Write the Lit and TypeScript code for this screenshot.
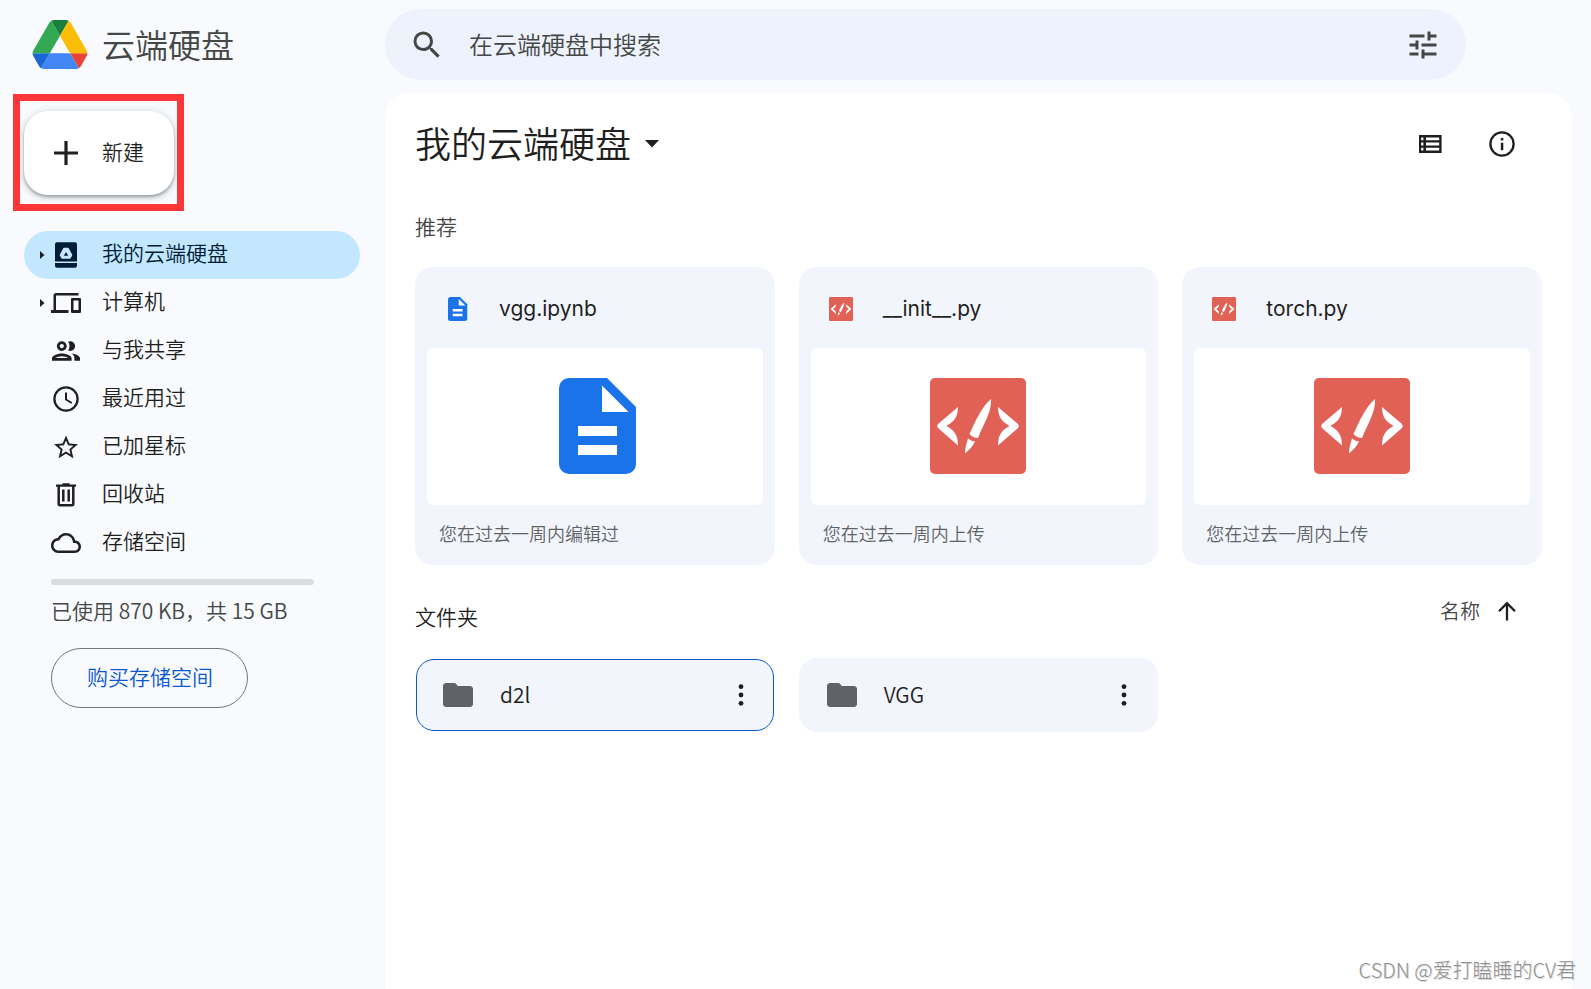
import { LitElement, html, css, svg, nothing } from "lit";
import { customElement, property } from "lit/decorators.js";
import { classMap } from "lit/directives/class-map.js";

const icons = {
  drive: svg`<svg viewBox="0 0 30 30"><path d="M6 2.3h18a2 2 0 0 1 2 2v17.3H4V4.300a2 2 0 0 1 2-2zM4 23h22v2.700a2 2 0 0 1-2 2H6a2 2 0 0 1-2-2z"/><path d="M13.200 9h3.600l3.200 6-1.500 2.500h-7L10 15z" fill="#c2e7ff" stroke="#c2e7ff" stroke-width="2.500" stroke-linejoin="round"/><path d="M15 12l2.200 3.800h-4.400z"/></svg>`,
  computers: svg`<svg viewBox="0 0 24 24"><path d="M4 6h18V4H4c-1.100 0-2 .9-2 2v11.500H0V20h14v-2.500H4V6zm19 2h-6c-.55 0-1 .45-1 1v10c0 .55.45 1 1 1h6c.55 0 1-.45 1-1V9c0-.55-.45-1-1-1zm-1 9.500h-4V10h4v7.500z"/></svg>`,
  shared: svg`<svg viewBox="1.300 1.300 21.400 21.400"><path d="M9 13.750c-2.340 0-7 1.170-7 3.500V19h14v-1.750c0-2.330-4.660-3.500-7-3.500zM4.340 17c.84-.58 2.870-1.250 4.660-1.250s3.820.67 4.660 1.250H4.340zM9 12c1.930 0 3.500-1.570 3.500-3.500S10.930 5 9 5 5.500 6.570 5.500 8.500 7.070 12 9 12zm0-5c.83 0 1.500.67 1.500 1.500S9.830 10 9 10s-1.500-.67-1.500-1.500S8.170 7 9 7zm7.040 6.810c1.160.84 1.960 1.960 1.960 3.440V19h4v-1.750c0-2.020-3.500-3.170-5.960-3.440zM15 12c1.930 0 3.500-1.570 3.500-3.500S16.930 5 15 5c-.54 0-1.040.13-1.500.35.63.89 1 1.980 1 3.150s-.37 2.260-1 3.150c.46.22.96.35 1.500.35z"/></svg>`,
  recent: svg`<svg viewBox="0 0 30 30"><circle cx="15" cy="15" r="11.600" fill="none" stroke="currentColor" stroke-width="2.300"/><path d="M15 8.500v7l5.800 3.500" fill="none" stroke="currentColor" stroke-width="2"/></svg>`,
  starred: svg`<svg viewBox="-0.500 -0.900 25 25"><path d="M22 9.240l-7.190-.62L12 2 9.190 8.630 2 9.240l5.460 4.730L5.820 21 12 17.270 18.180 21l-1.630-7.030L22 9.240zM12 15.400l-3.760 2.270 1-4.280-3.320-2.880 4.380-.38L12 6.100l1.710 4.040 4.380.38-3.320 2.880 1 4.280L12 15.400z"/></svg>`,
  trash: svg`<svg viewBox="0 0 30 30"><path d="M5 5.600h20M11.500 4.500h7" fill="none" stroke="currentColor" stroke-width="2.400"/><path d="M7.700 6v17.800a1.500 1.500 0 0 0 1.500 1.500h11.600a1.500 1.500 0 0 0 1.500-1.500V6M12.300 9.500v12M17.700 9.500v12" fill="none" stroke="currentColor" stroke-width="2.500"/></svg>`,
  storage: svg`<svg viewBox="0 0 24 24"><path d="M12 6c2.620 0 4.880 1.860 5.390 4.430l.3 1.500 1.530.11c1.560.1 2.780 1.410 2.780 2.960 0 1.650-1.350 3-3 3H6c-2.210 0-4-1.790-4-4 0-2.050 1.530-3.760 3.560-3.970l1.070-.11.5-.95C8.080 7.140 9.940 6 12 6m0-2C9.110 4 6.600 5.640 5.350 8.040 2.340 8.360 0 10.910 0 14c0 3.310 2.690 6 6 6h13c2.760 0 5-2.240 5-5 0-2.640-2.050-4.780-4.650-4.960C18.670 6.590 15.640 4 12 4z"/></svg>`,
  search: svg`<svg viewBox="0 0 24 24"><path d="M15.500 14h-.79l-.28-.27A6.470 6.470 0 0 0 16 9.500 6.500 6.500 0 1 0 9.500 16c1.610 0 3.090-.59 4.230-1.570l.27.28v.79l5 4.990L20.490 19l-4.990-5zm-6 0C7.010 14 5 11.990 5 9.500S7.010 5 9.500 5 14 7.010 14 9.500 11.990 14 9.500 14z"/></svg>`,
  tune: svg`<svg viewBox="0 0 24 24"><path d="M3 17v2h6v-2H3zM3 5v2h10V5H3zm10 16v-2h8v-2h-8v-2h-2v6h2zM7 9v2H3v2h4v2h2V9H7zm14 4v-2H11v2h10zm-6-4h2V7h4V5h-4V3h-2v6z"/></svg>`,
  list: svg`<svg viewBox="0 0 30 30"><path fill-rule="evenodd" d="M4 6h22.600v18H4zM6.200 8.500v2.700h2.200v-2.700zM11 8.500v2.700h13.200v-2.700zM6.200 13.600v2.800h2.200v-2.800zM11 13.600v2.800h13.200v-2.800zM6.200 18.800v2.700h2.200v-2.700zM11 18.800v2.700h13.200v-2.700z"/></svg>`,
  info: svg`<svg viewBox="0 0 30 30"><circle cx="15" cy="15" r="11.600" fill="none" stroke="currentColor" stroke-width="2.300"/><path d="M13.800 9h2.500v2.400h-2.500zM13.800 13.800h2.500v7.400h-2.500z"/></svg>`,
  plus: svg`<svg viewBox="0 0 30 30"><path d="M13.400 3h3.200v10.400H27v3.200H16.600V27h-3.200V16.600H3v-3.200h10.400z"/></svg>`,
  more: svg`<svg viewBox="0 0 30 30"><circle cx="15" cy="6.700" r="2.400"/><circle cx="15" cy="15" r="2.400"/><circle cx="15" cy="23.300" r="2.400"/></svg>`,
  folder: svg`<svg viewBox="0 0 24 24"><path d="M10 4H4c-1.100 0-1.990.9-1.990 2L2 18c0 1.100.9 2 2 2h16c1.100 0 2-.9 2-2V8c0-1.100-.9-2-2-2h-8l-2-2z"/></svg>`,
  up: svg`<svg viewBox="0 0 30 30"><path d="M15 24.500V7.500M7 15.200L15 7.200l8 8" fill="none" stroke="currentColor" stroke-width="2.300"/></svg>`,
  caret: svg`<svg viewBox="0 0 14 8"><path d="M0 0h14L7 7.500z"/></svg>`,
  doc: svg`<svg viewBox="0 0 96 96"><path fill="#1a73e8" d="M22 0h38l29 29v57a10 10 0 0 1-10 10H22a10 10 0 0 1-10-10V10A10 10 0 0 1 22 0z"/><path fill="#fff" d="M55 7.500L81.500 34H55zM31 48h39v10H31zM31 67h39v10H31z"/></svg>`,
  code: svg`<svg viewBox="0 0 96 96"><rect width="96" height="96" rx="5" fill="#e16156"/><path fill="#fff" d="M28 29C28 38 25 43 16.500 48 25 52.500 28 58 28 67.500L8 50Q6.500 48 8 46zM68 29C68 38 71 43 79.500 48 71 52.500 68 58 68 67.500L88 50Q89.500 48 88 46zM61 21C62 34 53 47 48 60Q43 60 39.500 56C45 44 51 30 61 21zM38 60.500Q41 63 45 63.500C43 68 39 72 35 75.500 35 70 36.500 65 38 60.500z"/></svg>`,
  logo: svg`<svg viewBox="0 0 87.300 78"><path d="m6.600 66.850 3.850 6.650c.8 1.400 1.950 2.500 3.300 3.300l13.750-23.800h-27.500c0 1.550.4 3.100 1.200 4.500z" fill="#1967d2"/><path d="m43.650 25-13.750-23.800c-1.350.8-2.500 1.900-3.300 3.300l-25.400 44a9.060 9.060 0 0 0 -1.200 4.500h27.500z" fill="#34a853"/><path d="m73.550 76.800c1.350-.8 2.500-1.900 3.300-3.300l1.600-2.750 7.650-13.250c.8-1.400 1.200-2.950 1.200-4.500h-27.500z" fill="#ea4335"/><path d="m43.650 25 13.750-23.800c-1.350-.8-2.900-1.200-4.500-1.200h-18.500c-1.600 0-3.150.45-4.500 1.200z" fill="#188038"/><path d="m59.800 53h-32.300l-13.750 23.800c1.350.8 2.900 1.200 4.500 1.200h50.800c1.600 0 3.150-.45 4.500-1.200z" fill="#4285f4"/><path d="m73.400 26.500-12.700-22c-.8-1.400-1.950-2.500-3.300-3.300l-13.750 23.800 16.150 28h27.450c0-1.550-.4-3.100-1.200-4.500z" fill="#fbbc04"/></svg>`,
};

type IconName = keyof typeof icons;

const base = css`
  * { box-sizing: border-box; }
  button, input { font: inherit; color: inherit; background: none; border: 0; padding: 0; margin: 0; }
  button { cursor: pointer; }
  a { color: inherit; text-decoration: none; }
  svg { display: block; width: 100%; height: 100%; fill: currentColor; }
  .icon { flex: none; width: 30px; height: 30px; }
`;

@customElement("drive-sidebar")
export class DriveSidebar extends LitElement {
  static styles = [
    base,
    css`
      :host { display: block; }
      .brand { display: flex; align-items: center; gap: 14px; height: 89px; padding-left: 32px; color: #444746; font-size: 33px; line-height: 48px; }
      .brand .name { padding-bottom: 2px; }
      .logo { width: 56px; height: 49px; flex: none; }
      .frame { width: 171px; height: 117px; margin: 5px 0 20px 13px; padding: 10px 4px; border: 7px solid #fd3737; }
      .new { display: flex; align-items: center; gap: 21px; width: 150px; height: 84px; padding-left: 27px; border-radius: 24px; background: #fff; color: #1f1f1f; box-shadow: 0 2px 3px rgba(60, 64, 67, 0.4), 0 2px 6px 2px rgba(60, 64, 67, 0.15); }
      .new .name { padding-bottom: 4px; }
      .nav { margin: 0 25px 0 24px; }
      .item { display: flex; align-items: center; height: 48px; border-radius: 24px; color: #1f1f1f; }
      .item.active { background: #c2e7ff; color: #001d35; }
      .expander { flex: none; width: 27px; padding-left: 16px; color: #1f1f1f; }
      .expander svg { width: 5px; height: 8px; }
      .label { margin-left: 21px; line-height: 30px; padding-bottom: 6px; }
      .usage { display: block; appearance: none; width: 263px; height: 6px; margin: 12px 0 0 51px; border: 0; border-radius: 3px; background: #dadce0; overflow: hidden; }
      .usage::-webkit-progress-bar { background: #dadcdf; }
      .usage::-webkit-progress-value { background: #0b57d0; }
      .quota { display: block; margin: 10px 0 23px 51px; line-height: 30px; color: #444746; }
      .buy { display: block; height: 60px; margin-left: 51px; padding: 0 34px 4px 35px; border: 1px solid #747775; border-radius: 30px; color: #0b57d0; }
    `,
  ];

  private items: { icon: IconName; label: string; expand?: boolean; active?: boolean }[] = [
    { icon: "drive", label: "我的云端硬盘", expand: true, active: true },
    { icon: "computers", label: "计算机", expand: true },
    { icon: "shared", label: "与我共享" },
    { icon: "recent", label: "最近用过" },
    { icon: "starred", label: "已加星标" },
    { icon: "trash", label: "回收站" },
    { icon: "storage", label: "存储空间" },
  ];

  render() {
    return html`
      <div class="brand"><span class="logo">${icons.logo}</span><span class="name">云端硬盘</span></div>
      <div class="frame">
        <button class="new"><span class="icon">${icons.plus}</span><span class="name">新建</span></button>
      </div>
      <nav class="nav">
        ${this.items.map(
          (i) => html`<a href="#" class=${classMap({ item: true, active: !!i.active })}>
            <span class="expander">${i.expand ? svg`<svg viewBox="0 0 5 8"><path d="M0 0l4.500 4L0 8z"/></svg>` : nothing}</span>
            <span class="icon">${icons[i.icon]}</span><span class="label">${i.label}</span>
          </a>`,
        )}
      </nav>
      <progress class="usage" id="usage" max="15" value="0"></progress>
      <label class="quota" for="usage">已使用 870 KB，共 15 GB</label>
      <button class="buy">购买存储空间</button>
    `;
  }
}

@customElement("file-card")
export class FileCard extends LitElement {
  @property() name = "";
  @property() kind: IconName = "doc";
  @property() note = "";

  static styles = [
    base,
    css`
      :host { display: block; min-width: 0; }
      .card { display: block; padding: 0 12px; border-radius: 18px; background: #f2f6fc; color: #1f1f1f; }
      .head { display: flex; align-items: center; height: 81px; padding: 3px 0 0 18px; gap: 30px; font-family: Inter, "Noto Sans CJK SC", sans-serif; font-size: 21px; font-weight: 400; }
      .small { flex: none; width: 24px; height: 24px; }
      .preview { display: flex; align-items: center; justify-content: center; height: 157px; padding-bottom: 1px; border-radius: 6px; background: #fff; }
      .large { width: 96px; height: 96px; }
      .note { padding: 15px 12px 18px; font-size: 18px; line-height: 27px; color: #5f6368; }
    `,
  ];

  render() {
    return html`<a class="card" href="#">
      <div class="head"><span class="small">${icons[this.kind]}</span><span>${this.name}</span></div>
      <div class="preview"><span class="large">${icons[this.kind]}</span></div>
      <div class="note">${this.note}</div>
    </a>`;
  }
}

@customElement("folder-tile")
export class FolderTile extends LitElement {
  @property() name = "";
  @property({ type: Boolean }) selected = false;

  static styles = [
    base,
    css`
      :host { display: block; min-width: 0; }
      .tile { display: flex; align-items: center; height: 74px; padding: 0 19px 0 25px; border-radius: 18px; background: #f2f6fc; color: #1f1f1f; }
      .tile.selected { height: 72px; margin: 1px; padding: 0 17px 0 23px; border: 1px solid #0b57d0; }
      .open { flex: 1; display: flex; align-items: center; gap: 24px; }
      .folder { flex: none; width: 36px; height: 36px; color: #5f6368; }
      .name { padding-bottom: 2px; }
    `,
  ];

  render() {
    return html`<div class=${classMap({ tile: true, selected: this.selected })}>
      <a class="open" href="#"><span class="folder">${icons.folder}</span><span class="name">${this.name}</span></a>
      <button class="icon" aria-label="更多操作">${icons.more}</button>
    </div>`;
  }
}

@customElement("app-root")
export class AppRoot extends LitElement {
  static styles = [
    base,
    css`
      :host { display: grid; grid-template-columns: 385px minmax(0, 1fr); min-height: 100vh; background: #f8fafd; position: relative; font-family: "Noto Sans CJK SC", sans-serif; font-weight: 350; font-size: 21px; line-height: 30px; color: #1f1f1f; }
      .content { display: flex; flex-direction: column; padding: 9px 19px 0 0; }
      .search { display: flex; align-items: center; height: 71px; margin: 0 106px 13px 0; padding: 0 25px 0 24px; border-radius: 36px; background: #edf2fc; color: #444746; }
      .glyph { flex: none; width: 36px; height: 36px; }
      .query { flex: 1; min-width: 0; margin: 0 24px; height: 48px; padding-bottom: 2px; font-size: 24px; outline: 0; }
      .query::placeholder { color: #444746; opacity: 1; }
      .panel { flex: 1; padding: 24px 30px 24px 30px; border-radius: 24px 24px 0 0; background: #fff; }
      .bar { display: flex; align-items: center; justify-content: space-between; }
      .title { margin: 0; font-size: 36px; line-height: 54px; font-weight: 350; }
      .crumb { display: flex; align-items: center; gap: 14px; height: 54px; }
      .crumb .name { padding-bottom: 4px; }
      .caret { width: 14px; height: 8px; }
      .tools { display: flex; gap: 42px; padding-right: 25px; }
      .section { margin: 0; font-size: 21px; line-height: 30px; font-weight: 350; }
      .suggested { margin: 40px 0 26px; color: #444746; }
      .grid { display: grid; grid-template-columns: repeat(3, minmax(0, 1fr)); gap: 24px; }
      .files { margin: 31px 0 22px; }
      .sort { display: flex; align-items: center; gap: 12px; padding: 0 20px 10px 0; font-size: 20px; color: #444746; }
      .sort .icon { color: #1f1f1f; }
      .watermark { position: absolute; right: 15px; bottom: 4px; font-size: 20px; line-height: 30px; font-weight: 300; color: #8f8f8f; text-shadow: 1px 1px 0 rgba(120, 120, 120, 0.3); }
    `,
  ];

  render() {
    return html`
      <drive-sidebar></drive-sidebar>
      <div class="content">
        <form class="search" role="search">
          <button class="glyph" type="button" aria-label="搜索">${icons.search}</button>
          <input class="query" type="text" aria-label="在云端硬盘中搜索" placeholder="在云端硬盘中搜索" />
          <button class="glyph" type="button" aria-label="高级搜索">${icons.tune}</button>
        </form>
        <main class="panel">
          <div class="bar">
            <h1 class="title"><button class="crumb"><span class="name">我的云端硬盘</span><span class="caret">${icons.caret}</span></button></h1>
            <div class="tools">
              <button class="icon" aria-label="列表布局">${icons.list}</button>
              <button class="icon" aria-label="查看详细信息">${icons.info}</button>
            </div>
          </div>
          <h2 class="section suggested">推荐</h2>
          <div class="grid">
            <file-card name="vgg.ipynb" kind="doc" note="您在过去一周内编辑过"></file-card>
            <file-card name="__init__.py" kind="code" note="您在过去一周内上传"></file-card>
            <file-card name="torch.py" kind="code" note="您在过去一周内上传"></file-card>
          </div>
          <div class="bar files">
            <h2 class="section">文件夹</h2>
            <button class="sort">名称<span class="icon">${icons.up}</span></button>
          </div>
          <div class="grid">
            <folder-tile name="d2l" selected></folder-tile>
            <folder-tile name="VGG"></folder-tile>
          </div>
        </main>
      </div>
      <div class="watermark">CSDN @爱打瞌睡的CV君</div>
    `;
  }
}
